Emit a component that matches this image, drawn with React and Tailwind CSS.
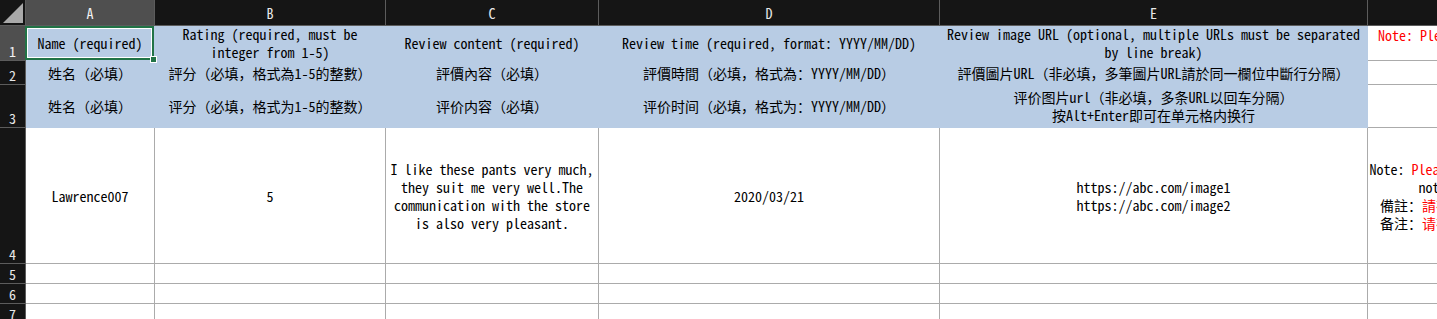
import React from 'react'

const blue = 'bg-[#b8cce4] border-r border-b border-[#b8cce4] flex items-center justify-center text-center whitespace-nowrap'
const white = 'bg-white border-r border-b border-[#ababab] flex items-center justify-center text-center whitespace-nowrap'
const rowHead = 'bg-[#151515] border-r border-b border-[#5c5c5c] text-[#e8e8e8] flex items-end justify-center pb-[2px] leading-none'
const rowHeadOn = 'bg-[#4f4f4f] border-r border-b border-[#5c5c5c] text-[#f2f2f2] flex items-end justify-center pb-[2px] leading-none'
const colHead = 'bg-[#151515] border-r border-b border-[#5c5c5c] text-[#e8e8e8] flex items-center justify-center'
const colHeadOn = 'bg-[#4f4f4f] border-r border-b border-[#5c5c5c] text-[#f2f2f2] flex items-center justify-center'

function Corner () {
  return (
    <div className="bg-[#151515] border-r border-b border-[#5c5c5c] flex items-end justify-end p-[2px]">
      <svg width="20" height="20" viewBox="0 0 20 20">
        <polygon points="20,0 20,20 0,20" fill="#a9a9a9" />
      </svg>
    </div>
  )
}

function Selected ({ children }) {
  return (
    <div className={`${blue} relative`}>
      {children}
      <div className="absolute left-[-1px] top-0 right-0 bottom-0 border-2 border-[#217346] shadow-[inset_0_0_0_1px_#ffffff] pointer-events-none z-10" />
      <div className="absolute right-[-3px] bottom-[-3px] w-[7px] h-[7px] bg-[#217346] border border-white z-20" />
    </div>
  )
}

export default function App () {
  let cols = ['B', 'C', 'D', 'E', 'F']
  return (
    <div className="w-[1437px] h-[319px] overflow-hidden bg-white text-[14px] leading-[18px] text-black font-['Noto_Sans_Mono_CJK_SC','Noto_Sans_CJK_SC','Liberation_Mono',monospace]">
      <div className="grid grid-cols-[26px_129px_231px_213px_341px_428px_375px] grid-rows-[26px_35px_24px_43px_136px_20px_20px_20px] w-max">
        {/* column letters */}
        <Corner />
        <div className={colHeadOn}>A</div>
        {cols.map(c => <div key={c} className={colHead}>{c}</div>)}

        {/* row 1 */}
        <div className={rowHeadOn}>1</div>
        <Selected>Name (required)</Selected>
        <div className={blue}>Rating (required, must be<br />integer from 1-5)</div>
        <div className={blue}>Review content (required)</div>
        <div className={blue}>Review time (required, format: YYYY/MM/DD)</div>
        <div className={blue}>Review image URL (optional, multiple URLs must be separated<br />by line break)</div>
        <div className="bg-white border-b border-[#ababab] whitespace-nowrap pl-[10px] text-[#ff0000]">Note: Please read the notes in row 4 before filling in.</div>

        {/* row 2 */}
        <div className={rowHead}>2</div>
        <div className={blue}>姓名（必填）</div>
        <div className={blue}>評分（必填，格式為1-5的整數）</div>
        <div className={blue}>評價內容（必填）</div>
        <div className={blue}>評價時間（必填，格式為：YYYY/MM/DD）</div>
        <div className={blue}>評價圖片URL（非必填，多筆圖片URL請於同一欄位中斷行分隔）</div>
        <div className="bg-white border-b border-[#ababab]" />

        {/* row 3 */}
        <div className={rowHead}>3</div>
        <div className={blue}>姓名（必填）</div>
        <div className={blue}>评分（必填，格式为1-5的整数）</div>
        <div className={blue}>评价内容（必填）</div>
        <div className={blue}>评价时间（必填，格式为：YYYY/MM/DD）</div>
        <div className={blue}>评价图片url（非必填，多条URL以回车分隔）<br />按Alt+Enter即可在单元格内换行</div>
        <div className="bg-white border-b border-[#ababab]" />

        {/* row 4 */}
        <div className={rowHead}>4</div>
        <div className={white}>Lawrence007</div>
        <div className={white}>5</div>
        <div className={white}>
          I like these pants very much,<br />they suit me very well.The<br />communication with the store<br />is also very pleasant.
        </div>
        <div className={white}>2020/03/21</div>
        <div className={white}>https://abc.com/image1<br />https://abc.com/image2</div>
        <div className={white}>
          <div>
            <div>Note: <span className="text-[#ff0000]">Please delete this sample row before uploading,</span></div>
            <div>notes in column F will not be imported.</div>
            <div>備註：<span className="text-[#ff0000]">請在上傳前刪除此範例列，此欄備註不會被匯入。</span></div>
            <div>备注：<span className="text-[#ff0000]">请在上传前删除此示例行，此栏备注不会被导入。</span></div>
          </div>
        </div>

        {/* rows 5-7 */}
        {['5', '6', '7'].map(r => (
          <React.Fragment key={r}>
            <div className={rowHead}>{r}</div>
            <div className={white} />
            <div className={white} />
            <div className={white} />
            <div className={white} />
            <div className={white} />
            <div className={white} />
          </React.Fragment>
        ))}
      </div>
    </div>
  )
}
